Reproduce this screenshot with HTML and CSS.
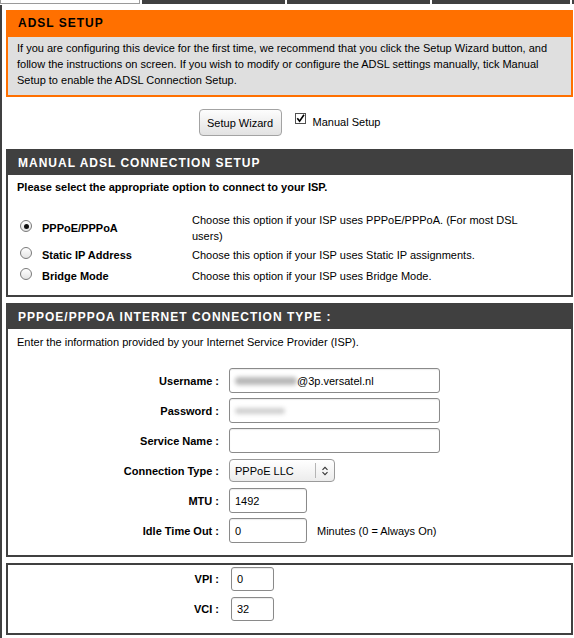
FILE: index.html
```html
<!DOCTYPE html>
<html>
<head>
<meta charset="utf-8">
<title>ADSL Setup</title>
<link rel="stylesheet" href="styles.css">
</head>
<body>
<div class="tabs">
  <div class="tab tab-active"></div>
  <div class="tab tab-2"></div>
  <div class="tab tab-3"></div>
  <div class="tab tab-4"></div>
  <div class="tab tab-5"></div>
</div>
<div class="page">
  <div class="box box-orange">
    <h2 class="box-title">ADSL SETUP</h2>
    <div class="box-body intro">
      <p>If you are configuring this device for the first time, we recommend that you click the Setup Wizard button, and follow the instructions on screen. If you wish to modify or configure the ADSL settings manually, tick Manual Setup to enable the ADSL Connection Setup.</p>
    </div>
  </div>

  <div class="mode-row">
    <button class="btn" type="button">Setup Wizard</button>
    <label class="check">
      <span class="checkbox"><svg width="11" height="11" viewBox="0 0 11 11"><path d="M2.3 5.2 L4.6 8.2 L9 1.8" fill="none" stroke="#000" stroke-width="1.6"/></svg></span>
      <span class="check-text">Manual Setup</span>
    </label>
  </div>

  <div class="box box-dark">
    <h2 class="box-title">MANUAL ADSL CONNECTION SETUP</h2>
    <div class="box-body">
      <p class="lead">Please select the appropriate option to connect to your ISP.</p>
      <div class="options">
        <div class="opt-label"><span class="radio radio-on"></span><span>PPPoE/PPPoA</span></div>
        <div class="opt-desc">Choose this option if your ISP uses PPPoE/PPPoA. (For most DSL users)</div>
        <div class="opt-label"><span class="radio"></span><span>Static IP Address</span></div>
        <div class="opt-desc">Choose this option if your ISP uses Static IP assignments.</div>
        <div class="opt-label"><span class="radio"></span><span>Bridge Mode</span></div>
        <div class="opt-desc">Choose this option if your ISP uses Bridge Mode.</div>
      </div>
    </div>
  </div>

  <div class="box box-dark">
    <h2 class="box-title">PPPOE/PPPOA INTERNET CONNECTION TYPE :</h2>
    <div class="box-body">
      <p class="plain">Enter the information provided by your Internet Service Provider (ISP).</p>
      <div class="form">
        <div class="f-label">Username :</div>
        <div class="field w-long"><span class="blur blur-user"></span><span>@3p.versatel.nl</span></div>
        <div class="f-label">Password :</div>
        <div class="field w-long"><span class="blur blur-pass"></span></div>
        <div class="f-label">Service Name :</div>
        <div class="field w-long"></div>
        <div class="f-label">Connection Type :</div>
        <div class="select">
          <span class="select-value">PPPoE LLC</span>
          <span class="select-arrow"><svg width="8" height="12" viewBox="0 0 8 12"><path d="M1.5 4.8 L4 2.3 L6.5 4.8 M1.5 7.2 L4 9.7 L6.5 7.2" fill="none" stroke="#333" stroke-width="1.1"/></svg></span>
        </div>
        <div class="f-label">MTU :</div>
        <div class="field w-mtu">1492</div>
        <div class="f-label">Idle Time Out :</div>
        <div class="field-row"><div class="field w-mtu">0</div><span class="hint">Minutes (0 = Always On)</span></div>
      </div>
    </div>
  </div>

  <div class="box box-plain">
    <div class="form form-vc">
      <div class="f-label">VPI :</div>
      <div class="field w-short">0</div>
      <div class="f-label">VCI :</div>
      <div class="field w-short">32</div>
    </div>
  </div>
</div>
</body>
</html>
```

FILE: styles.css
```css
html, body {
  margin: 0;
  padding: 0;
  background: #fff;
}
body {
  font-family: "Liberation Sans", Arial, Helvetica, sans-serif;
  font-size: 11px;
  line-height: 16px;
  color: #000;
  width: 574px;
  height: 638px;
  overflow: hidden;
}

/* top tabs (only the bottom edge is visible) */
.tabs {
  display: flex;
  gap: 2px;
  height: 4px;
}
.tab {
  height: 4px;
  background: #404040;
}
.tab-active {
  width: 140px;
  background: #fff;
  box-sizing: border-box;
  border: 1px solid #9a9a9a;
  border-top: none;
}
.tab-2 { width: 143px; }
.tab-3 { width: 143px; }
.tab-4 { width: 138px; }
.tab-5 { flex: 1; }

.page {
  margin-top: 1px;
  border-left: 2px solid #404040;
  padding: 5px 1px 3px 4px;
}

/* boxes */
.box-title {
  margin: 0;
  height: 26px;
  line-height: 28px;
  padding-left: 12px;
  font-size: 12px;
  font-weight: bold;
  letter-spacing: 1px;
  color: #fff;
  background: #404040;
}
.box-orange .box-title {
  height: 27px;
  line-height: 27px;
  background: #ff7000;
  color: #000;
}
.box-body {
  border: 2px solid #404040;
  border-top: none;
  padding: 4px 0 9px 9px;
}
.box-orange .box-body {
  border-color: #ff7000;
  background: #dfdfdf;
  padding: 3px 21px 7px 9px;
}
.box-body p {
  margin: 0;
}
.box-dark {
  margin-bottom: 6px;
}
.box-dark + .box-dark .box-body {
  padding: 5px 0 12px 9px;
}

/* wizard / manual row */
.mode-row {
  display: flex;
  justify-content: center;
  align-items: flex-start;
  gap: 13px;
  margin: 12px 0 13px;
}
.btn {
  width: 83px;
  height: 27px;
  padding: 0;
  font-family: inherit;
  font-size: 11px;
  color: #000;
  border: 1px solid #a3a3a3;
  border-radius: 4px;
  background: linear-gradient(#fdfdfd, #e2e2e2);
}
.check {
  display: flex;
  align-items: flex-start;
  gap: 7px;
  margin-top: 4px;
}
.checkbox {
  width: 11px;
  height: 11px;
  box-sizing: border-box;
  border: 1px solid #505050;
  background: #fff;
  display: flex;
  align-items: center;
  justify-content: center;
}
.checkbox svg {
  display: block;
  flex: none;
}
.check-text {
  margin-top: 1px;
}

/* connection options */
.lead {
  font-weight: bold;
}
.options {
  display: grid;
  grid-template-columns: 175px 332px;
  grid-auto-rows: minmax(21px, auto);
  margin-top: 17px;
}
.opt-label {
  display: flex;
  align-items: center;
  gap: 10px;
  padding-left: 3px;
  font-weight: bold;
}
.opt-desc {
  display: flex;
  align-items: center;
}
.radio {
  width: 12px;
  height: 12px;
  box-sizing: border-box;
  border-radius: 50%;
  border: 1px solid #7a7a7a;
  background: linear-gradient(#fff, #e4e4e4);
  margin-bottom: 4px;
  display: flex;
  align-items: center;
  justify-content: center;
  flex: none;
}
.radio-on::after {
  content: "";
  width: 5px;
  height: 5px;
  border-radius: 50%;
  background: #111;
}

/* form */
.form {
  display: grid;
  grid-template-columns: 202px auto;
  grid-auto-rows: 25px;
  column-gap: 10px;
  row-gap: 5px;
  margin-top: 18px;
  align-items: center;
  justify-items: start;
}
.f-label {
  justify-self: end;
  font-weight: bold;
}
.field {
  box-sizing: border-box;
  height: 25px;
  border: 1px solid #8a8a8a;
  border-radius: 3px;
  background: #fff;
  padding: 0 5px;
  display: flex;
  align-items: center;
  box-shadow: inset 0 1px 1px rgba(0,0,0,0.08);
}
.w-long { width: 211px; }
.w-mtu { width: 78px; }
.w-short { width: 43px; height: 24px; }
.field-row {
  display: flex;
  align-items: center;
  gap: 10px;
}
.blur {
  display: inline-block;
  height: 8px;
  border-radius: 4px;
  background: #b8b8b8;
  filter: blur(2px);
}
.blur-user { width: 62px; }
.blur-pass { width: 50px; height: 6px; background: #cfcfcf; }

.select {
  box-sizing: border-box;
  width: 106px;
  height: 23px;
  border: 1px solid #9a9a9a;
  border-radius: 4px;
  background: linear-gradient(#ffffff, #ececec);
  display: flex;
  align-items: stretch;
}
.select-value {
  flex: 1;
  padding-left: 5px;
  display: flex;
  align-items: center;
}
.select-arrow {
  width: 18px;
  margin: 3px 0;
  border-left: 1px solid #b5b5b5;
  display: flex;
  align-items: center;
  justify-content: center;
}

/* VPI / VCI box */
.box-plain {
  border: 2px solid #404040;
  padding: 2px 0 12px 9px;
}
.form-vc {
  margin-top: 0;
  column-gap: 12px;
  row-gap: 6px;
  grid-auto-rows: 24px;
}
```
